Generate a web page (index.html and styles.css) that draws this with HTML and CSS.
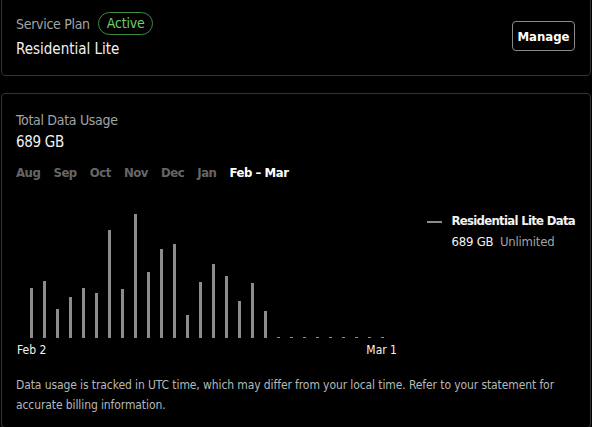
FILE: index.html
```html
<!DOCTYPE html>
<html lang="en">
<head>
    <meta charset="UTF-8">
    <meta name="viewport" content="width=device-width, initial-scale=1.0">
    <title>Service Plan</title>
    <link rel="stylesheet" href="styles.css">
</head>
<body>
    <div class="page">
        <div class="card plan">
            <div class="plan-info">
                <div class="plan-head">
                    <span class="label">Service Plan</span>
                    <span class="badge">Active</span>
                </div>
                <div class="plan-name">Residential Lite</div>
            </div>
            <button class="button">Manage</button>
        </div>

        <div class="card usage">
            <div class="label">Total Data Usage</div>
            <div class="total">689 GB</div>
            <div class="tabs">
                <span class="tab">Aug</span>
                <span class="tab">Sep</span>
                <span class="tab">Oct</span>
                <span class="tab">Nov</span>
                <span class="tab">Dec</span>
                <span class="tab">Jan</span>
                <span class="tab selected">Feb – Mar</span>
            </div>

            <div class="chart-row">
                <div class="chart">
                    <div class="bars" id="bars"></div>
                    <div class="axis">
                        <span>Feb 2</span>
                        <span>Mar 1</span>
                    </div>
                </div>
                <div class="legend">
                    <div class="legend-title"><span class="swatch"></span>Residential Lite Data</div>
                    <div class="legend-value">689 GB <span class="muted">Unlimited</span></div>
                </div>
            </div>

            <p class="note">Data usage is tracked in UTC time, which may differ from your local time. Refer to your statement for accurate billing information.</p>
        </div>
    </div>

    <script>
        // daily usage, Feb 2 - Mar 1 (bar heights in px)
        const days = [50, 57, 29, 41, 50, 45, 108, 49, 124, 66, 89, 94, 23, 56, 74, 62, 37, 55, 27,
                      0, 0, 0, 0, 0, 0, 0, 0, 0];
        const bars = document.getElementById('bars');
        days.forEach(h => {
            const bar = document.createElement('div');
            bar.className = 'bar';
            bar.style.height = Math.max(h, 1) + 'px';
            bars.appendChild(bar);
        });
    </script>
</body>
</html>
```

FILE: styles.css
```css
body {
    margin: 0;
    background: #000;
    color: #f2f2f2;
    font-family: "DejaVu Sans Condensed", Roboto, sans-serif;
}
.page {
    margin: -3px 1px 0;
    display: flex;
    flex-direction: column;
    gap: 17px;
}
.card {
    border: 1px solid #333;
    border-radius: 4px;
}
.plan {
    display: flex;
    align-items: center;
    justify-content: space-between;
    padding: 14px 15px 15px 14px;
}
.plan-head {
    display: flex;
    align-items: center;
    gap: 8px;
    height: 23px;
}
.label {
    color: #a0a4a8;
    font-size: 14px;
    line-height: 20px;
    letter-spacing: -0.3px;
}
.badge {
    color: #6fcf6f;
    border: 1px solid #3d8c40;
    border-radius: 12px;
    font-size: 14px;
    line-height: 21px;
    padding: 0 8px;
    letter-spacing: -0.2px;
}
.plan-name {
    margin-top: 3px;
    font-size: 15px;
    line-height: 22px;
}
.button {
    background: transparent;
    color: #fff;
    border: 1px solid #8a8a8a;
    border-radius: 4px;
    font-family: inherit;
    font-weight: bold;
    font-size: 13px;
    width: 63px;
    height: 30px;
    padding: 0;
}
.usage {
    padding: 16px 15px 12px 14px;
}
.total {
    font-size: 15px;
    line-height: 24px;
    letter-spacing: -0.3px;
}
.tabs {
    display: flex;
    gap: 13px;
    margin-top: 9px;
    font-size: 13px;
    font-weight: bold;
    line-height: 20px;
    letter-spacing: -0.45px;
}
.tab {
    color: #666;
}
.tab.selected {
    color: #fff;
}
.chart-row {
    display: flex;
    justify-content: space-between;
    margin-top: 27px;
}
.chart {
    margin-left: 14px;
    padding-top: 3px;
}
.bars {
    display: flex;
    align-items: flex-end;
    gap: 10px;
    height: 125px;
}
.bar {
    width: 3px;
    background: #8c8c8c;
}
.axis {
    display: flex;
    justify-content: space-between;
    margin: 4px -13px 0;
    font-size: 12px;
    line-height: 16px;
}
.legend {
    font-size: 13px;
    line-height: 21px;
}
.legend-title {
    font-weight: bold;
    letter-spacing: -0.7px;
}
.swatch {
    display: inline-block;
    width: 15px;
    height: 2px;
    background: #8c8c8c;
    margin-right: 9px;
    vertical-align: middle;
}
.legend-value {
    padding-left: 24px;
    letter-spacing: -0.2px;
}
.muted {
    color: #a0a4a8;
    margin-left: 3px;
}
.note {
    margin: 17px 0 0;
    color: #b5b8bb;
    font-size: 12px;
    line-height: 20px;
    letter-spacing: -0.1px;
}
```
